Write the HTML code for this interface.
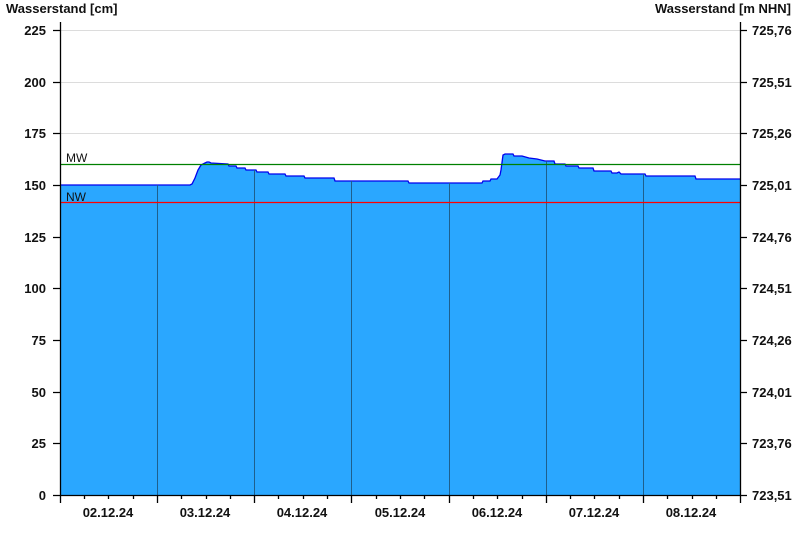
<!DOCTYPE html>
<html><head><meta charset="utf-8"><style>
html,body{margin:0;padding:0;background:#fff;}
svg{display:block;}
text{font-family:"Liberation Sans",Arial,sans-serif;font-weight:bold;font-size:13px;fill:#111;}
</style></head><body>
<svg width="800" height="550" xmlns="http://www.w3.org/2000/svg">
<text x="6" y="13">Wasserstand [cm]</text>
<text x="791" y="13" text-anchor="end">Wasserstand [m NHN]</text>
<g stroke="#dcdcdc" stroke-width="1">
<line x1="60" x2="740" y1="30.5" y2="30.5"/><line x1="60" x2="740" y1="82.5" y2="82.5"/><line x1="60" x2="740" y1="133.5" y2="133.5"/><line x1="60" x2="740" y1="185.5" y2="185.5"/><line x1="60" x2="740" y1="237.5" y2="237.5"/><line x1="60" x2="740" y1="288.5" y2="288.5"/><line x1="60" x2="740" y1="340.5" y2="340.5"/><line x1="60" x2="740" y1="392.5" y2="392.5"/><line x1="60" x2="740" y1="443.5" y2="443.5"/>
</g>
<path d="M60,185 L190,185 192,184 195,178 198,170 201,165 205,163 207,162 209,162 211,163 228,164 229,166 236,166 237,168 245,168 246,170 256,170 257,172 268,172 269,174 285,174 286,176 304,176 305,178 334,178 335,181 408,181 409,183 482,183 483,181 490,181 491,179 497,179 500,175 501,170 503,155 505,154 513,154 514,156 522,156 529,158 537,159 545,161 554,161 555,164 565,164 566,166 578,166 579,168 593,168 594,171 611,171 612,173 617,173 619,172 621,174 645,174 646,176 695,176 696,179 740,179 L740,495 L60,495 Z" fill="#2aa7ff" stroke="none"/>
<path d="M60,185 L190,185 192,184 195,178 198,170 201,165 205,163 207,162 209,162 211,163 228,164 229,166 236,166 237,168 245,168 246,170 256,170 257,172 268,172 269,174 285,174 286,176 304,176 305,178 334,178 335,181 408,181 409,183 482,183 483,181 490,181 491,179 497,179 500,175 501,170 503,155 505,154 513,154 514,156 522,156 529,158 537,159 545,161 554,161 555,164 565,164 566,166 578,166 579,168 593,168 594,171 611,171 612,173 617,173 619,172 621,174 645,174 646,176 695,176 696,179 740,179" fill="none" stroke="#0000ee" stroke-width="1.3"/>
<g stroke="#1e5f8c" stroke-width="1">
<line x1="157.5" x2="157.5" y1="185" y2="495"/><line x1="254.5" x2="254.5" y1="170" y2="495"/><line x1="351.5" x2="351.5" y1="181" y2="495"/><line x1="449.5" x2="449.5" y1="183" y2="495"/><line x1="546.5" x2="546.5" y1="161" y2="495"/><line x1="643.5" x2="643.5" y1="174" y2="495"/>
</g>
<line x1="60" x2="740" y1="164.5" y2="164.5" stroke="#008000" stroke-width="1.3"/>
<line x1="60" x2="740" y1="202.5" y2="202.5" stroke="#ff0000" stroke-width="1.3"/>
<text x="66" y="162" style="font-weight:normal;font-size:12px">MW</text>
<text x="66" y="201" style="font-weight:normal;font-size:12px">NW</text>
<g stroke="#000" stroke-width="1.3">
<line x1="60.5" x2="60.5" y1="22" y2="495"/><line x1="740.5" x2="740.5" y1="22" y2="495"/><line x1="60" x2="740" y1="495.5" y2="495.5"/>
<path d="M53,30.5H60M53,82.5H60M53,133.5H60M53,185.5H60M53,237.5H60M53,288.5H60M53,340.5H60M53,392.5H60M53,443.5H60M53,495.5H60"/>
<path d="M740,30.5H747M740,82.5H747M740,133.5H747M740,185.5H747M740,237.5H747M740,288.5H747M740,340.5H747M740,392.5H747M740,443.5H747M740,495.5H747"/>
<path d="M60.5,495V503M157.5,495V503M254.5,495V503M351.5,495V503M449.5,495V503M546.5,495V503M643.5,495V503M740.5,495V503"/>
<path d="M84.5,495V499M108.5,495V499M133.5,495V499M181.5,495V499M206.5,495V499M230.5,495V499M278.5,495V499M303.5,495V499M327.5,495V499M376.5,495V499M400.5,495V499M424.5,495V499M473.5,495V499M497.5,495V499M522.5,495V499M570.5,495V499M594.5,495V499M619.5,495V499M667.5,495V499M692.5,495V499M716.5,495V499"/>
</g>
<g text-anchor="end">
<text x="46" y="35">225</text><text x="46" y="87">200</text><text x="46" y="138">175</text><text x="46" y="190">150</text><text x="46" y="242">125</text><text x="46" y="293">100</text><text x="46" y="345">75</text><text x="46" y="397">50</text><text x="46" y="448">25</text><text x="46" y="500">0</text>
</g>
<g>
<text x="752" y="35">725,76</text><text x="752" y="87">725,51</text><text x="752" y="138">725,26</text><text x="752" y="190">725,01</text><text x="752" y="242">724,76</text><text x="752" y="293">724,51</text><text x="752" y="345">724,26</text><text x="752" y="397">724,01</text><text x="752" y="448">723,76</text><text x="752" y="500">723,51</text>
</g>
<g text-anchor="middle">
<text x="108" y="517">02.12.24</text><text x="205" y="517">03.12.24</text><text x="302" y="517">04.12.24</text><text x="400" y="517">05.12.24</text><text x="497" y="517">06.12.24</text><text x="594" y="517">07.12.24</text><text x="691" y="517">08.12.24</text>
</g>
</svg>
</body></html>
